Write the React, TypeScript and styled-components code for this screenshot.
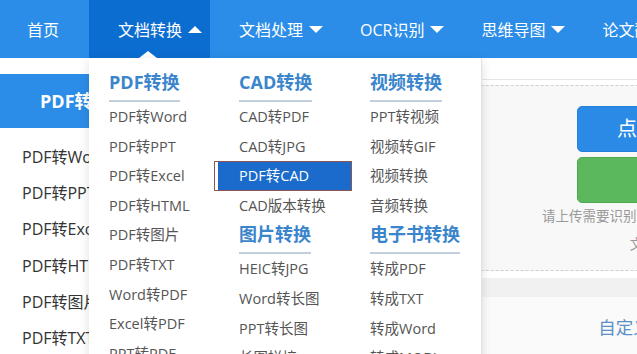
import React from "react"
import styled, { createGlobalStyle } from "styled-components"

const GlobalStyle = createGlobalStyle`
  html, body {
    margin: 0;
    padding: 0;
    background: #f5f5f5;
    overflow: hidden;
  }
  body {
    font-family: "Open Sans", "Noto Sans CJK SC", sans-serif;
  }
`

const Viewport = styled.div`
  width: 100vw;
  height: 100vh;
  overflow: hidden;
`

const Page = styled.div`
  width: 1200px;
`

const Nav = styled.nav`
  display: flex;
  height: 58px;
  background: #2b8de8;
`

type NavItemProps = {
  $active?: boolean
  $home?: boolean
}

const NavItem = styled.div<NavItemProps>`
  position: relative;
  display: flex;
  align-items: center;
  flex-shrink: 0;
  padding: ${({ $home }) => ($home ? "0 30px 0 27px" : "0 8px 0 29px")};
  color: #fff;
  font-size: 16px;
  white-space: nowrap;
  background: ${({ $active }) => ($active ? "#0c6dd1" : "transparent")};
`

const Caret = styled.span<{ $up?: boolean }>`
  width: 0;
  height: 0;
  margin-left: 6px;
  border-left: 7px solid transparent;
  border-right: 7px solid transparent;
  ${({ $up }) =>
    $up ? "border-bottom: 7px solid #fff;" : "border-top: 7px solid #fff;"}
`

const Pointer = styled.span`
  position: absolute;
  left: 50px;
  bottom: 0;
  width: 0;
  height: 0;
  border-left: 9px solid transparent;
  border-right: 9px solid transparent;
  border-bottom: 7px solid #fff;
`

const Dropdown = styled.div`
  position: absolute;
  top: 100%;
  left: 0;
  z-index: 10;
  display: flex;
  box-sizing: border-box;
  width: 393px;
  height: 310px;
  padding: 12px 0 0 20px;
  background: #fff;
  border-right: 1px solid #e2e2e2;
  box-shadow: 0 3px 10px rgba(0, 0, 0, 0.13);
`

const Column = styled.div<{ $width: number }>`
  display: flex;
  flex: 0 0 ${({ $width }) => $width}px;
  flex-direction: column;
  align-items: flex-start;
`

const GroupTitle = styled.div<{ $gap?: number }>`
  margin-top: ${({ $gap }) => $gap || 0}px;
  padding-bottom: 6px;
  border-bottom: 2px solid #c3cfdd;
  color: #3a85cc;
  font-size: 18px;
  font-weight: 700;
  line-height: 24px;
`

const Item = styled.div<{ $selected?: boolean }>`
  box-sizing: border-box;
  height: 29.6px;
  color: #555;
  font-size: 14.5px;
  line-height: 29.6px;
  white-space: nowrap;
  ${({ $selected }) =>
    $selected
      ? `
    width: 138px;
    margin-left: -25px;
    padding-left: 24px;
    line-height: 27.6px;
    color: #fff;
    background: #1a6bcb;
    border: 1px solid #8f5656;
    box-shadow: inset 3px 0 0 #fff;
  `
      : ""}
`

const Body = styled.div`
  display: flex;
  height: 296px;
`

const Sidebar = styled.aside`
  width: 216px;
  padding-top: 16px;
  background: #fff;
`

const SideHead = styled.div`
  height: 54px;
  padding-left: 40px;
  background: #2b8de8;
  color: #fff;
  font-size: 18px;
  font-weight: 700;
  line-height: 54px;
`

const SideList = styled.div`
  margin-top: 11px;
`

const SideLink = styled.div`
  padding-left: 22px;
  color: #333;
  font-size: 16px;
  line-height: 36.2px;
`

const Main = styled.main`
  display: flex;
  flex-direction: column;
  width: 922px;
  background: #fff;
`

const TopStrip = styled.div`
  height: 21px;
  border-bottom: 1px solid #e6e6e6;
`

const UploadWrap = styled.div`
  padding: 5px 0 0;
`

const DashedBox = styled.div`
  display: flex;
  flex-direction: column;
  align-items: center;
  box-sizing: border-box;
  height: 186px;
  padding-top: 20px;
  background: #f8f8f8;
  border: 1px dashed #cfcfcf;
`

const Button = styled.div<{ $green?: boolean }>`
  box-sizing: border-box;
  width: 200px;
  height: 46px;
  margin-top: ${({ $green }) => ($green ? "5px" : "0")};
  border-radius: 5px;
  background: ${({ $green }) => ($green ? "#5cb85c" : "#2b8ae6")};
  border: 1px solid ${({ $green }) => ($green ? "#4ea94e" : "#2380da")};
  color: #fff;
  font-size: 20px;
  line-height: 44px;
  text-align: center;
`

const Hint = styled.div`
  margin-top: -1px;
  color: #999;
  font-size: 13.5px;
  line-height: 28px;
  text-align: center;
`

const GrayBand = styled.div`
  height: 19px;
  margin-top: 7px;
  background: #f1f1f1;
`

const CustomPanel = styled.div`
  flex: 1;
  padding-top: 20px;
  background: #fafafa;
  color: #5b8fc6;
  font-size: 17.5px;
  line-height: 20px;
  text-align: center;
`

type Group = { title: string; items: string[]; gap?: number }

const columns: { width: number; groups: Group[] }[] = [
  {
    width: 130,
    groups: [
      {
        title: "PDF转换",
        items: [
          "PDF转Word",
          "PDF转PPT",
          "PDF转Excel",
          "PDF转HTML",
          "PDF转图片",
          "PDF转TXT",
          "Word转PDF",
          "Excel转PDF",
          "PPT转PDF",
        ],
      },
    ],
  },
  {
    width: 131,
    groups: [
      { title: "CAD转换", items: ["CAD转PDF", "CAD转JPG", "PDF转CAD", "CAD版本转换"] },
      { title: "图片转换", items: ["HEIC转JPG", "Word转长图", "PPT转长图", "长图拼接"], gap: 2 },
    ],
  },
  {
    width: 112,
    groups: [
      { title: "视频转换", items: ["PPT转视频", "视频转GIF", "视频转换", "音频转换"] },
      { title: "电子书转换", items: ["转成PDF", "转成TXT", "转成Word", "转成MOBI"], gap: 2 },
    ],
  },
]

const navRest = ["文档处理", "OCR识别", "思维导图", "论文翻译"]
const sideLinks = ["PDF转Word", "PDF转PPT", "PDF转Excel", "PDF转HTML", "PDF转图片", "PDF转TXT"]

const App: React.FC = () => {
  return (
    <Viewport>
      <GlobalStyle />
      <Page>
        <Nav>
          <NavItem $home>首页</NavItem>
          <NavItem $active>
            文档转换
            <Caret $up />
            <Pointer />
            <Dropdown>
              {columns.map((col, ci) => (
                <Column key={ci} $width={col.width}>
                  {col.groups.map((g) => (
                    <React.Fragment key={g.title}>
                      <GroupTitle $gap={g.gap}>{g.title}</GroupTitle>
                      {g.items.map((it) => (
                        <Item key={it} $selected={it === "PDF转CAD"}>
                          {it}
                        </Item>
                      ))}
                    </React.Fragment>
                  ))}
                </Column>
              ))}
            </Dropdown>
          </NavItem>
          {navRest.map((n) => (
            <NavItem key={n}>
              {n}
              <Caret />
            </NavItem>
          ))}
        </Nav>
        <Body>
          <Sidebar>
            <SideHead>PDF转换</SideHead>
            <SideList>
              {sideLinks.map((s) => (
                <SideLink key={s}>{s}</SideLink>
              ))}
            </SideList>
          </Sidebar>
          <Main>
            <TopStrip />
            <UploadWrap>
              <DashedBox>
                <Button>点击选择文件</Button>
                <Button $green>批量上传</Button>
                <Hint>
                  请上传需要识别的图片文件，单个不超过十兆
                  <br />
                  文件最大为十兆
                </Hint>
              </DashedBox>
            </UploadWrap>
            <GrayBand />
            <CustomPanel>自定义文档转换格式</CustomPanel>
          </Main>
        </Body>
      </Page>
    </Viewport>
  )
}

export default App
